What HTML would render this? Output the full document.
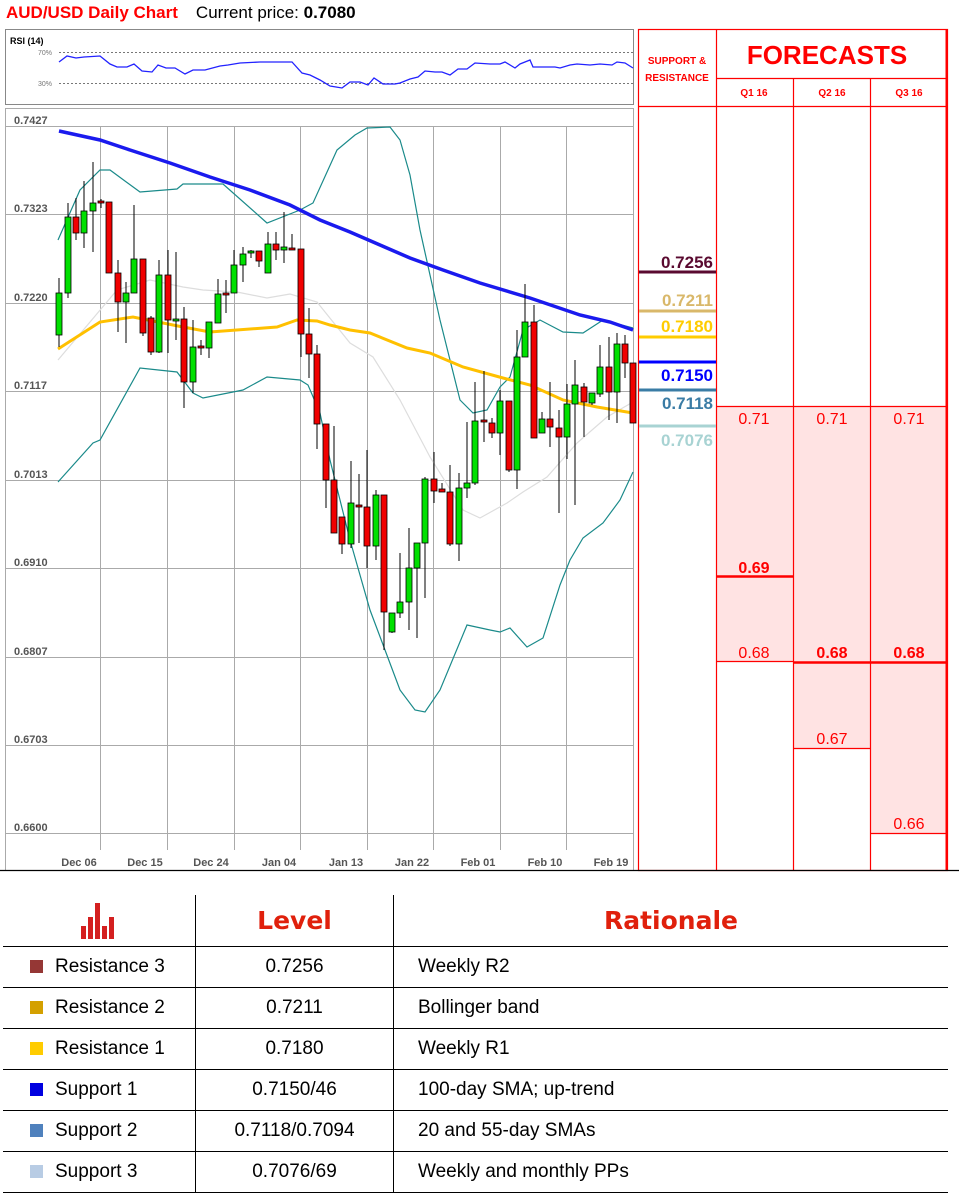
<!DOCTYPE html>
<html><head><meta charset="utf-8"><style>
body{margin:0;width:959px;height:1194px;background:#fff;position:relative;overflow:hidden;font-family:"Liberation Sans",sans-serif}
.abs{position:absolute}
table.t{position:absolute;left:3px;top:895px;width:945px;border-collapse:collapse;font-size:19px;color:#000}
table.t td{height:40px;border-bottom:1px solid #000;padding:0}
table.t td.c2{border-left:1px solid #000;border-right:1px solid #000;text-align:center}
table.t td.c3{padding-left:24px}
.sq{display:inline-block;width:13px;height:13px;margin:0 12px 0 27px;vertical-align:-1px}
.hd{font-family:"DejaVu Sans","Liberation Sans",sans-serif;font-weight:900;color:#e0200c;font-size:25px;letter-spacing:0}
</style></head><body>
<div class="abs" style="left:6px;top:3px;font-size:17px;white-space:nowrap"><span style="color:#f00;font-weight:bold">AUD/USD Daily Chart</span><span style="margin-left:18px">Current price: <b>0.7080</b></span></div>

<svg class="abs" style="left:0;top:0" width="640" height="871" viewBox="0 0 640 871">
<rect x="5.5" y="29.5" width="628" height="75" fill="none" stroke="#888"/>
<text x="10" y="44" font-size="9" font-weight="bold" font-family="Liberation Sans">RSI (14)</text>
<text x="38" y="55" font-size="7" fill="#777" font-family="Liberation Sans">70%</text>
<text x="38" y="86" font-size="7" fill="#777" font-family="Liberation Sans">30%</text>
<line x1="59" y1="52.5" x2="633" y2="52.5" stroke="#777" stroke-dasharray="2,2"/>
<line x1="59" y1="83.5" x2="633" y2="83.5" stroke="#777" stroke-dasharray="2,2"/>
<polyline fill="none" stroke="#2222ff" stroke-width="1.3" points="59,62 67,56 76,58 84,57 100,56 110,64 117,67 127,67 134,64 142,71 152,72 158,65 166,68 175,68 185,74 193,70 205,70 220,66 228,65 240,63 260,62 292,62 302,73 310,75 320,80 330,86 342,88 350,82 360,82 368,85 374,78 383,84 395,84 400,83 410,79 418,77 425,71 435,72 442,72 450,75 458,69 467,69 475,63 490,64 500,64 505,62 515,68 520,64 530,60 533,67 545,67 555,67 560,68 570,65 577,64 590,65 600,64 612,65 617,62 625,63 633,68"/>
<rect x="5.5" y="108.5" width="628" height="762" fill="none" stroke="#aaa"/>
<g stroke="#aaa" stroke-width="1">
<line x1="5" y1="126.5" x2="633" y2="126.5"/><line x1="5" y1="214.5" x2="633" y2="214.5"/><line x1="5" y1="303.5" x2="633" y2="303.5"/><line x1="5" y1="391.5" x2="633" y2="391.5"/><line x1="5" y1="480.5" x2="633" y2="480.5"/><line x1="5" y1="568.5" x2="633" y2="568.5"/><line x1="5" y1="657.5" x2="633" y2="657.5"/><line x1="5" y1="745.5" x2="633" y2="745.5"/><line x1="5" y1="833.5" x2="633" y2="833.5"/>
<line x1="100.5" y1="126" x2="100.5" y2="850"/><line x1="167.5" y1="126" x2="167.5" y2="850"/><line x1="234.5" y1="126" x2="234.5" y2="850"/><line x1="300.5" y1="126" x2="300.5" y2="850"/><line x1="367.5" y1="126" x2="367.5" y2="850"/><line x1="433.5" y1="126" x2="433.5" y2="850"/><line x1="500.5" y1="126" x2="500.5" y2="850"/><line x1="566.5" y1="126" x2="566.5" y2="850"/>
</g>
<g font-size="11" font-weight="bold" fill="#555" font-family="Liberation Sans">
<text x="14" y="124">0.7427</text><text x="14" y="212">0.7323</text><text x="14" y="301">0.7220</text><text x="14" y="389">0.7117</text><text x="14" y="478">0.7013</text><text x="14" y="566">0.6910</text><text x="14" y="655">0.6807</text><text x="14" y="743">0.6703</text><text x="14" y="831">0.6600</text>
</g>
<g font-size="11" font-weight="bold" fill="#555" font-family="Liberation Sans" text-anchor="middle">
<text x="79" y="866">Dec 06</text><text x="145" y="866">Dec 15</text><text x="211" y="866">Dec 24</text><text x="279" y="866">Jan 04</text><text x="346" y="866">Jan 13</text><text x="412" y="866">Jan 22</text><text x="478" y="866">Feb 01</text><text x="545" y="866">Feb 10</text><text x="611" y="866">Feb 19</text>
</g>
<polyline fill="none" stroke="#ddd" stroke-width="1.2" points="58,360 117,290 150,280 183,287 203,290 237,292 267,298 290,294 317,302 350,343 373,357 400,400 430,457 463,510 480,518 507,503 523,492 547,477 577,443 607,417 633,402"/>
<polyline fill="none" stroke="#1a8a8a" stroke-width="1.2" points="58,240 80,190 100,170 110,170 140,192 177,189 183,184 223,184 267,223 300,210 313,203 337,150 355,135 367,128 390,127 400,140 410,175 420,230 440,320 460,400 473,413 487,410 500,387 510,377 523,330 540,320 563,332 583,333 603,320 633,328"/>
<polyline fill="none" stroke="#1a8a8a" stroke-width="1.2" points="58,482 93,443 100,440 140,368 177,372 193,393 203,398 243,390 267,377 300,380 308,385 320,413 330,460 350,540 370,610 385,650 400,690 415,710 425,712 440,690 467,625 490,630 500,632 510,628 527,647 543,638 560,585 570,560 583,538 603,523 620,500 633,472"/>
<polyline fill="none" stroke="#ffc000" stroke-width="3" points="58,349 100,322 133,317 183,327 210,332 277,327 297,320 317,321 330,325 350,330 370,333 407,348 430,353 463,367 503,378 530,385 563,400 597,407 633,413"/>
<polyline fill="none" stroke="#1a1aee" stroke-width="3.5" points="59,131 100,140 130,150 170,163 210,177 250,190 290,205 320,220 350,232 380,245 410,258 443,270 480,283 530,298 580,315 610,322 633,330"/>
</svg>

<svg class="abs" style="left:0;top:0" width="640" height="871" id="cs"></svg>
<script>
var d=[[59,'g',293,335,278,347],[68,'g',217,293,203,298],[76,'r',217,233,198,240],[84,'g',211,233,181,248],[93,'g',203,211,162,252],[101,'r',201,203,199,208],[109,'r',202,273,202,273],[118,'r',273,302,260,332],[126,'g',293,302,282,343],[134,'g',259,293,205,293],[143,'r',259,333,259,336],[151,'r',318,352,316,355],[159,'g',275,352,260,353],[168,'r',275,320,250,353],[176,'g',319,321,252,340],[184,'r',319,382,307,408],[193,'g',347,382,320,393],[201,'r',346,348,340,355],[209,'g',322,348,322,358],[218,'g',294,323,279,323],[226,'r',293,295,280,313],[234,'g',265,293,250,293],[243,'g',254,265,247,282],[251,'g',251,253,250,258],[259,'r',251,261,251,267],[268,'g',244,273,232,273],[276,'r',244,250,232,260],[284,'g',247,250,212,263],[292,'r',248,250,234,250],[301,'r',249,334,249,357],[309,'r',334,354,308,378],[317,'r',354,424,345,449],[326,'r',424,480,424,508],[334,'r',480,533,426,533],[342,'r',517,544,517,554],[351,'g',503,544,461,548],[359,'r',505,507,474,543],[367,'r',507,546,450,568],[376,'g',495,546,490,560],[384,'r',495,612,495,650],[392,'g',613,632,613,633],[400,'g',602,613,553,618],[409,'g',568,602,528,630],[417,'g',543,568,543,638],[425,'g',479,543,477,598],[434,'r',479,491,452,503],[442,'r',489,492,483,492],[450,'r',492,544,465,546],[459,'g',488,544,473,561],[467,'g',483,488,422,498],[475,'g',421,483,382,485],[484,'r',420,422,371,442],[492,'r',423,433,418,438],[500,'g',401,433,390,455],[509,'r',401,470,401,472],[517,'g',357,470,330,489],[525,'g',322,357,284,357],[534,'r',322,438,305,438],[542,'g',419,433,412,433],[550,'r',419,427,382,447],[559,'r',428,437,410,513],[567,'g',404,437,384,459],[575,'g',385,404,360,505],[584,'r',387,402,383,437],[592,'g',393,403,393,405],[600,'g',367,394,345,397],[609,'r',367,392,337,420],[617,'g',344,392,333,423],[625,'r',344,363,335,378],[633,'r',363,423,363,423]];
var s='';d.forEach(function(c){s+='<line x1="'+c[0]+'" y1="'+c[4]+'" x2="'+c[0]+'" y2="'+c[5]+'" stroke="#000"/><rect x="'+(c[0]-3)+'" y="'+c[2]+'" width="6" height="'+Math.max(1,c[3]-c[2])+'" fill="'+(c[1]=='g'?'#00e000':'#f00000')+'" stroke="#000" stroke-width="0.8"/>';});
document.getElementById('cs').innerHTML=s;
</script>

<svg class="abs" style="left:0;top:0" width="959" height="872">
<rect x="716" y="406" width="77" height="255" fill="#ffe3e3"/>
<rect x="793" y="406" width="77" height="342" fill="#ffe3e3"/>
<rect x="870" y="406" width="77" height="427" fill="#ffe3e3"/>
<g stroke="#f00" stroke-width="1.2" fill="none">
<rect x="638.5" y="29.5" width="309" height="841"/>
<line x1="716.5" y1="29" x2="716.5" y2="870"/>
<line x1="793.5" y1="78" x2="793.5" y2="870"/>
<line x1="870.5" y1="78" x2="870.5" y2="870"/>
<line x1="716" y1="78.5" x2="948" y2="78.5"/>
<line x1="638" y1="106.5" x2="948" y2="106.5"/>
<line x1="716" y1="406.5" x2="948" y2="406.5"/>
<line x1="716" y1="661.5" x2="793" y2="661.5"/>
<line x1="793" y1="748.5" x2="870" y2="748.5"/>
<line x1="870" y1="833.5" x2="948" y2="833.5"/>
</g>
<line x1="946.5" y1="29" x2="946.5" y2="870" stroke="#f00" stroke-width="2"/>
<line x1="716" y1="576.5" x2="793" y2="576.5" stroke="#f00" stroke-width="2.5"/>
<line x1="793" y1="662.5" x2="948" y2="662.5" stroke="#f00" stroke-width="2.5"/>
<line x1="0" y1="870.5" x2="959" y2="870.5" stroke="#000" stroke-width="1.2"/>
<g font-family="Liberation Sans" fill="#f00" text-anchor="middle">
<text x="677" y="64" font-size="10" font-weight="bold">SUPPORT &amp;</text>
<text x="677" y="81" font-size="10" font-weight="bold">RESISTANCE</text>
<text x="827" y="64" font-size="26" font-weight="bold">FORECASTS</text>
<text x="754" y="96" font-size="10" font-weight="bold">Q1 16</text>
<text x="832" y="96" font-size="10" font-weight="bold">Q2 16</text>
<text x="909" y="96" font-size="10" font-weight="bold">Q3 16</text>
<text x="754" y="424" font-size="16">0.71</text><text x="832" y="424" font-size="16">0.71</text><text x="909" y="424" font-size="16">0.71</text>
<text x="754" y="573" font-size="16" font-weight="bold">0.69</text>
<text x="754" y="658" font-size="16">0.68</text>
<text x="832" y="658" font-size="16" font-weight="bold">0.68</text>
<text x="909" y="658" font-size="16" font-weight="bold">0.68</text>
<text x="832" y="744" font-size="16">0.67</text>
<text x="909" y="829" font-size="16">0.66</text>
</g>
<g stroke-width="3">
<line x1="639" y1="272" x2="716" y2="272" stroke="#5a0a30"/>
<line x1="639" y1="311" x2="716" y2="311" stroke="#d9b86a"/>
<line x1="639" y1="337" x2="716" y2="337" stroke="#ffcc00"/>
<line x1="639" y1="362" x2="716" y2="362" stroke="#0000ff"/>
<line x1="639" y1="390" x2="716" y2="390" stroke="#3a7ca5"/>
<line x1="639" y1="426" x2="716" y2="426" stroke="#a8d3d3"/>
</g>
<g font-family="Liberation Sans" font-size="17" font-weight="bold" text-anchor="end">
<text x="713" y="268" fill="#5a0a30">0.7256</text>
<text x="713" y="306" fill="#d9b86a">0.7211</text>
<text x="713" y="332" fill="#ffcc00">0.7180</text>
<text x="713" y="381" fill="#0000ff">0.7150</text>
<text x="713" y="409" fill="#3a7ca5">0.7118</text>
<text x="713" y="446" fill="#a8d3d3">0.7076</text>
</g>
</svg>

<table class="t">
<tr><td style="width:192px;height:51px;text-align:center"><svg width="36" height="36" viewBox="0 0 36 36" style="vertical-align:-12px"><rect x="0" y="23" width="5" height="13" fill="#d42020"/><rect x="7" y="14" width="5" height="22" fill="#d42020"/><rect x="14" y="0" width="5" height="36" fill="#d42020"/><rect x="21" y="23" width="5" height="13" fill="#d42020"/><rect x="28" y="14" width="5" height="22" fill="#d42020"/></svg></td><td class="c2" style="width:197px"><span class="hd">Level</span></td><td class="c3" style="text-align:center;padding:0"><span class="hd">Rationale</span></td></tr>
<tr><td><span class="sq" style="background:#953735"></span>Resistance 3</td><td class="c2">0.7256</td><td class="c3">Weekly R2</td></tr>
<tr><td><span class="sq" style="background:#d4a000"></span>Resistance 2</td><td class="c2">0.7211</td><td class="c3">Bollinger band</td></tr>
<tr><td><span class="sq" style="background:#ffcc00"></span>Resistance 1</td><td class="c2">0.7180</td><td class="c3">Weekly R1</td></tr>
<tr><td><span class="sq" style="background:#0000e0"></span>Support 1</td><td class="c2">0.7150/46</td><td class="c3">100-day SMA; up-trend</td></tr>
<tr><td><span class="sq" style="background:#4f81bd"></span>Support 2</td><td class="c2">0.7118/0.7094</td><td class="c3">20 and 55-day SMAs</td></tr>
<tr><td><span class="sq" style="background:#b8cce4"></span>Support 3</td><td class="c2">0.7076/69</td><td class="c3">Weekly and monthly PPs</td></tr>
</table>
</body></html>
